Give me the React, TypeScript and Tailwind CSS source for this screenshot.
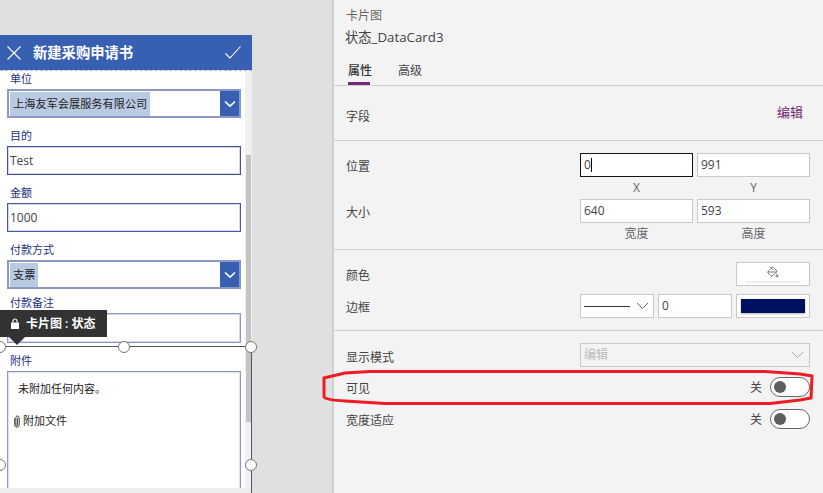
import React from "react";
import { PaintBucket } from "lucide-react";

const FONT = "font-['Open_Sans','Noto_Sans_CJK_SC',sans-serif]";

function Label({ children }: { children: React.ReactNode }) {
  return <div className="h-[18px] pl-[3px] pt-px text-[11px] leading-[14px] text-[#22307f]">{children}</div>;
}

function Dropdown({ value }: { value: string }) {
  return (
    <div className="flex h-[29px] w-[234px] border-2 border-[#8d98c2] bg-white">
      <div className="flex flex-1 items-center pl-px">
        <span className="flex h-[24px] items-center bg-[#b9cbe3] px-[3px] pt-px text-[11.2px] text-[#222]">{value}</span>
      </div>
      <div className="flex w-[19px] items-center justify-center bg-[#3860b2]">
        <svg width="12" height="8" viewBox="0 0 12 8" fill="none" stroke="white" strokeWidth="1.6">
          <path d="M1 1.5 L6 6.2 L11 1.5" />
        </svg>
      </div>
    </div>
  );
}

function TextBox({ value, tone }: { value?: string; tone: string }) {
  return (
    <div
      className={`flex w-[234px] items-center border bg-white pl-[2px] text-[12px] text-[#444] shadow-[inset_0_0_0_1px_#d3d8ea] ${tone}`}
    >
      {value}
    </div>
  );
}

function Handle({ className }: { className: string }) {
  return <div className={`absolute h-[12px] w-[12px] rounded-full border border-[#777] bg-white ${className}`} />;
}

function Field({ value, active }: { value: string; active?: boolean }) {
  return (
    <div
      className={`flex h-[24px] w-[113px] items-center border bg-white pl-[3px] text-[12px] text-[#444] ${
        active ? "border-[#111]" : "border-[#c8c8c8]"
      }`}
    >
      {value}
      {active && <span className="h-[14px] w-px bg-black" />}
    </div>
  );
}

function Caption({ children }: { children: React.ReactNode }) {
  return <div className="flex h-[22px] w-[113px] items-center justify-center text-[12px] text-[#666]">{children}</div>;
}

function Chevron({ color = "#666" }: { color?: string }) {
  return (
    <svg width="13" height="8" viewBox="0 0 13 8" fill="none" stroke={color} strokeWidth="1">
      <path d="M1 1 L6.5 6.5 L12 1" />
    </svg>
  );
}

function ToggleRow({ label }: { label: string }) {
  return (
    <div className="flex h-[20px] items-center justify-between text-[12px] text-[#444]">
      <span className="pt-[4px]">{label}</span>
      <div className="flex items-center">
        <span className="mr-[8px] pt-[2px]">关</span>
        <div className="flex h-[20px] w-[40px] items-center rounded-full border border-[#666] bg-white pl-[3px]">
          <div className="h-[12px] w-[12px] rounded-full bg-[#605e5c]" />
        </div>
      </div>
    </div>
  );
}

export default function App() {
  return (
    <div className={`flex h-[493px] w-[823px] overflow-hidden bg-[#e0e0e0] ${FONT}`}>
      <div className="relative w-[332px] shrink-0 pt-[35px]">
        <div className="w-[252px]">
          <div className="flex h-[35px] items-center bg-[#3860b2] pl-[7px] pr-[11px] text-white">
            <svg width="14" height="14" viewBox="0 0 14 14" stroke="white" strokeWidth="1.1">
              <path d="M0.5 0.5 L13.5 13.5 M13.5 0.5 L0.5 13.5" />
            </svg>
            <span className="ml-[12px] flex-1 text-[14.3px] font-semibold">新建采购申请书</span>
            <svg width="16" height="13" viewBox="0 0 16 13" fill="none" stroke="white" strokeWidth="1.1">
              <path d="M0.5 7.5 L5 12 L15.5 0.5" />
            </svg>
          </div>
          <div className="flex h-[418px] border-t border-dashed border-[#bbb] bg-white">
            <div className="h-full w-[245px] overflow-hidden pl-[7px]">
              <Label>单位</Label>
              <Dropdown value="上海友军会展服务有限公司" />
              <div className="mt-[10px]">
                <Label>目的</Label>
                <div className="flex h-[29px]"><TextBox value="Test" tone="border-[#3f4f98]" /></div>
              </div>
              <div className="mt-[10px]">
                <Label>金额</Label>
                <div className="flex h-[29px]"><TextBox value="1000" tone="border-[#4a5a9f]" /></div>
              </div>
              <div className="mt-[10px]">
                <Label>付款方式</Label>
                <Dropdown value="支票" />
              </div>
              <div className="mt-[6px]">
                <Label>付款备注</Label>
                <div className="flex h-[30px]"><TextBox tone="border-[#8d98c2]" /></div>
              </div>
              <div className="mt-[10px]">
                <Label>附件</Label>
                <div className="h-[130px] w-[234px] border border-[#8d98c2] pl-[10px] pt-[9px] text-[11px] text-[#222] shadow-[inset_0_0_0_1px_#dfe2ef]">
                  <div className="leading-[16px]">未附加任何内容。</div>
                  <div className="-ml-[4px] mt-[16px] flex items-center gap-[3px] leading-[16px]">
                    <svg width="6" height="13" viewBox="0 0 6 13" fill="none" stroke="#444" strokeWidth="1">
                      <path d="M3.6 3 V10 A0.9 0.9 0 0 1 1.9 10 V2.4 A1.3 1.3 0 0 1 3 1 A2 2 0 0 1 5.2 3 V9.8 A2.2 2.2 0 0 1 0.7 10 V3" />
                    </svg>
                    <span>附加文件</span>
                  </div>
                </div>
              </div>
            </div>
            <div className="h-full w-[7px] bg-[#f0f0f0] pl-px pt-[84px]">
              <div className="h-[267px] w-[5px] bg-[#c4c4c4]" />
            </div>
          </div>
          <div className="h-[5px] bg-[#ededed]" />
        </div>

        {/* Selection frame */}
        <div className="absolute left-0 top-[346px] h-px w-[252px] bg-[#555]" />
        <div className="absolute left-[251px] top-[346px] h-[147px] w-px bg-[#555]" />
        <Handle className="left-[-6px] top-[341px]" />
        <Handle className="left-[118px] top-[341px]" />
        <Handle className="left-[245px] top-[341px]" />
        <Handle className="left-[-6px] top-[459px]" />
        <Handle className="left-[245px] top-[459px]" />

        {/* Tooltip */}
        <div className="absolute left-0 top-[310px] flex h-[27px] w-[107px] items-center bg-[#333] pl-[11px] text-[12px] font-semibold text-white">
          <svg width="8" height="11" viewBox="0 0 8 11" className="mr-[7px]">
            <path d="M2 4.5 V3 A2 2 0 0 1 6 3 V4.5" fill="none" stroke="white" strokeWidth="1.2" />
            <rect x="0" y="4.5" width="8" height="6.5" rx="0.5" fill="white" />
          </svg>
          卡片图 : 状态
        </div>
        <div className="absolute left-[9px] top-[337px] h-0 w-0 border-x-[8px] border-t-[8px] border-x-transparent border-t-[#333]" />
      </div>

      <div className="relative h-[493px] flex-1 border-l-2 border-[#cfcfcf] bg-[#f3f3f3] text-[12px] text-[#444]">
        <div className="h-[86px] border-b border-[#cfcfcf] pl-[12px]">
          <div className="pt-[8px] leading-[16px] text-[#666]">卡片图</div>
          <div className="-ml-px mt-[4px] text-[13.3px] leading-[18px] text-[#444]">状态_DataCard3</div>
          <div className="mt-[17px] flex pl-[2px] text-[12px] leading-[16px]">
            <div className="mr-[28px] h-[22px] w-[22px] whitespace-nowrap border-b-[3px] border-[#742774] font-medium text-[#333]">属性</div>
            <div>高级</div>
          </div>
        </div>
        <div className="flex h-[55px] items-center justify-between border-b border-[#cfcfcf] pl-[12px] pr-[20px]">
          <span className="pt-[7px]">字段</span>
          <span className="text-[13px] text-[#742774]">编辑</span>
        </div>
        <div className="h-[109px] border-b border-[#cfcfcf] pl-[12px] pt-[12px]">
          <div className="flex">
            <div className="flex h-[24px] w-[234px] items-center pt-[4px]">位置</div>
            <div>
              <div className="flex gap-[4px]"><Field value="0" active /><Field value="991" /></div>
              <div className="flex gap-[4px]"><Caption>X</Caption><Caption>Y</Caption></div>
            </div>
          </div>
          <div className="flex">
            <div className="flex h-[24px] w-[234px] items-center pt-[4px]">大小</div>
            <div>
              <div className="flex gap-[4px]"><Field value="640" /><Field value="593" /></div>
              <div className="flex gap-[4px]"><Caption>宽度</Caption><Caption>高度</Caption></div>
            </div>
          </div>
        </div>
        <div className="h-[81px] border-b border-[#cfcfcf] pl-[12px] pt-[12px]">
          <div className="flex h-[24px] items-center justify-between pr-[13px]">
            <span className="pt-[4px]">颜色</span>
            <div className="flex h-[24px] w-[74px] flex-col items-center border border-[#c8c8c8] bg-white pt-[3px]">
              <PaintBucket size={12} strokeWidth={1.4} color="#444" />
              <div className="mt-[3px] h-[2px] w-[54px] bg-[#eeeeee]" />
            </div>
          </div>
          <div className="mt-[8px] flex h-[24px] items-center">
            <span className="w-[234px] pt-[4px]">边框</span>
            <div className="flex h-[24px] w-[74px] items-center gap-[6px] border border-[#c8c8c8] bg-white pl-[3px]">
              <div className="h-px w-[46px] bg-[#333]" />
              <Chevron />
            </div>
            <div className="ml-[4px] flex h-[24px] w-[74px] items-center border border-[#c8c8c8] bg-white pl-[3px]">0</div>
            <div className="ml-[4px] flex h-[24px] w-[74px] items-center justify-center border border-[#c8c8c8] bg-white">
              <div className="h-[14px] w-[64px] bg-[#000f5f] shadow-[0_1px_2px_rgba(0,0,0,0.3)]" />
            </div>
          </div>
        </div>
        <div className="pl-[12px] pr-[13px] pt-[12px]">
          <div className="flex h-[24px] items-center">
            <span className="w-[234px] pt-[6px]">显示模式</span>
            <div className="flex h-[24px] w-[230px] items-center justify-between border border-[#c8c8c8] px-[3px] pr-[5px] text-[#bbb]">
              <span>编辑</span>
              <Chevron color="#aaa" />
            </div>
          </div>
          <div className="mt-[10px]"><ToggleRow label="可见" /></div>
          <div className="mt-[12px]"><ToggleRow label="宽度适应" /></div>
        </div>
      </div>

      {/* Hand-drawn highlight */}
      <svg className="pointer-events-none absolute left-0 top-0" width="823" height="493" fill="none">
        <path
          d="M324 378 L324 397 Q326 400 345 401 L385 403.5 L770 403.5 L800 400 L811 398 L812 376 L800 374 L765 371.5 L370 371.5 L345 373 Z"
          stroke="#ed1c24"
          strokeWidth="3"
        />
      </svg>
    </div>
  );
}
